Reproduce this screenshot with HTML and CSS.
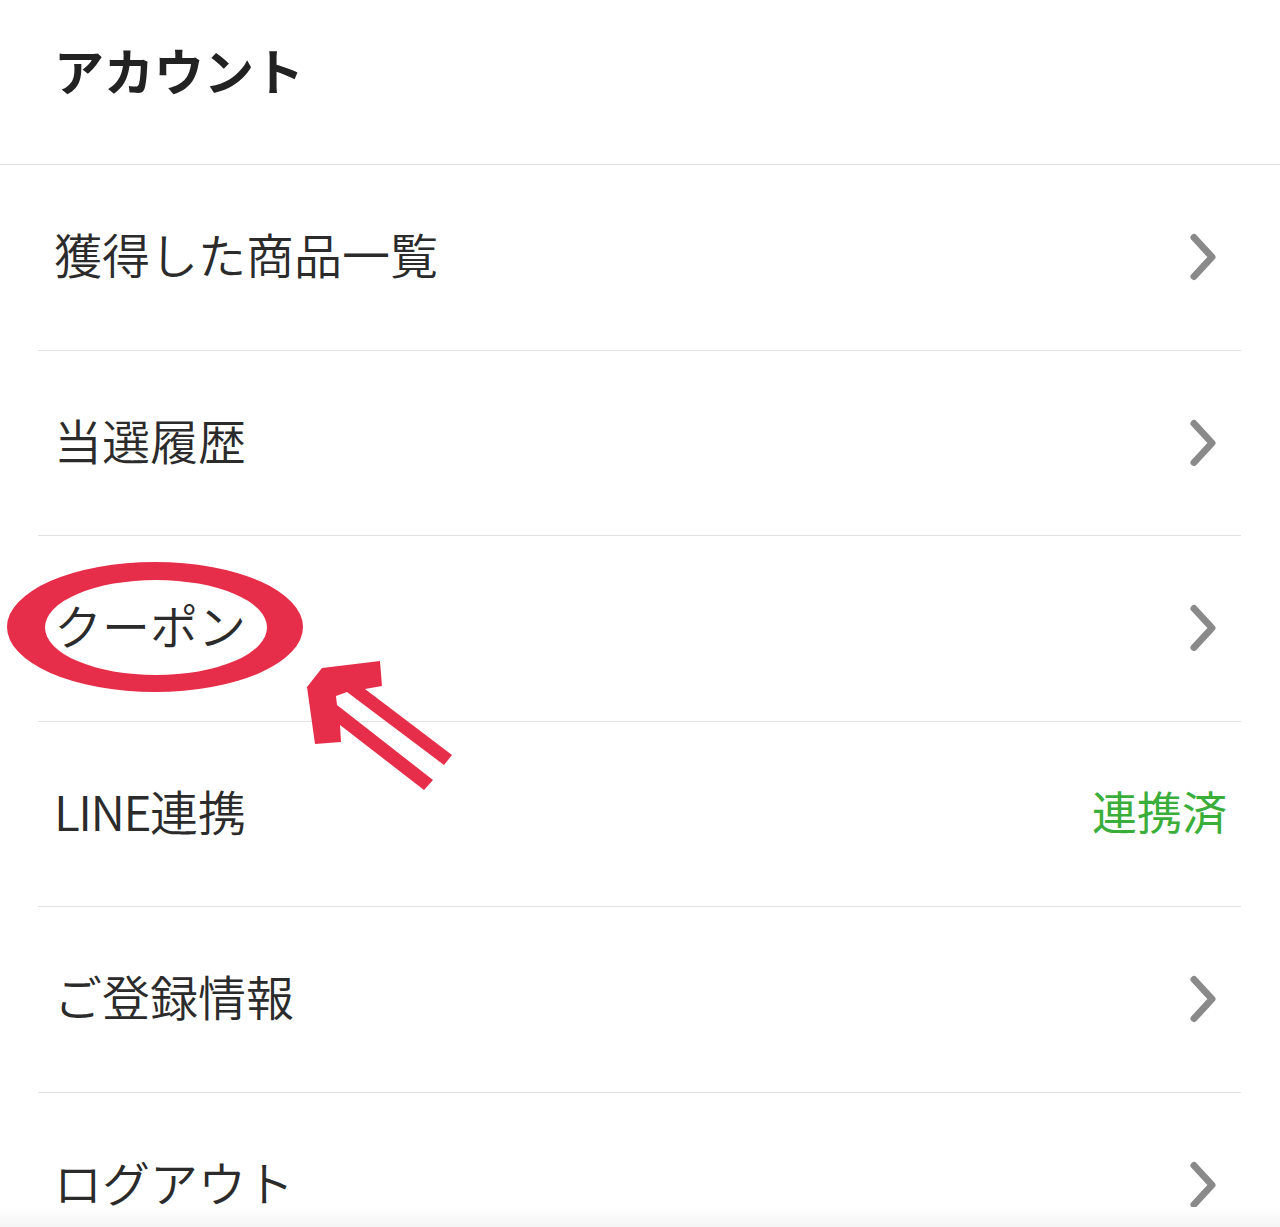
FILE: index.html
```html
<!DOCTYPE html>
<html lang="ja">
<head>
<meta charset="utf-8">
<title>アカウント</title>
<link rel="stylesheet" href="styles.css">
</head>
<body>
<header class="header">
  <h1 class="title">アカウント</h1>
</header>
<ul class="menu">
  <li class="row"><span class="label">獲得した商品一覧</span><svg class="chev" viewBox="0 0 40 50"><path d="M8 5.5 L26 25 L8 44.5"/></svg></li>
  <li class="row"><span class="label">当選履歴</span><svg class="chev" viewBox="0 0 40 50"><path d="M8 5.5 L26 25 L8 44.5"/></svg></li>
  <li class="row"><span class="label">クーポン</span><svg class="chev" viewBox="0 0 40 50"><path d="M8 5.5 L26 25 L8 44.5"/></svg></li>
  <li class="row"><span class="label"><span class="latin">LINE</span>連携</span><span class="status">連携済</span></li>
  <li class="row"><span class="label">ご登録情報</span><svg class="chev" viewBox="0 0 40 50"><path d="M8 5.5 L26 25 L8 44.5"/></svg></li>
  <li class="row"><span class="label">ログアウト</span><svg class="chev" viewBox="0 0 40 50"><path d="M8 5.5 L26 25 L8 44.5"/></svg></li>
</ul>
<svg class="markup" viewBox="0 0 1280 1227" width="1280" height="1227">
  <path class="mark" fill-rule="evenodd" d="M7 627 A148 65 0 1 0 303 627 A148 65 0 1 0 7 627 Z M45 627.5 A111 47.5 0 1 0 267 627.5 A111 47.5 0 1 0 45 627.5 Z"/>
  <polygon class="mark" points="322,668 380,661 382,686 365,689 452,755 444,765 347,692 336,696 337,705 433,780 424,790 340,725 341,742 315,744 307,687"/>
</svg>
<div class="bottom-fade"></div>
</body>
</html>
```
FILE: styles.css
```css
html, body {
  margin: 0;
  padding: 0;
  background: #ffffff;
  height: 1227px;
  overflow: hidden;
}
body {
  position: relative;
  font-family: "Noto Sans CJK JP", "Noto Sans", sans-serif;
  color: #2b2b2b;
}
.header {
  height: 164px;
  box-sizing: content-box;
  border-bottom: 1px solid #dedede;
  padding: 0 0 0 54px;
}
.title {
  margin: 0;
  padding-top: 44px;
  font-size: 50px;
  line-height: 50px;
  font-weight: 700;
  color: #222222;
  letter-spacing: 0;
}
.menu {
  list-style: none;
  margin: 0 39px 0 38px;
  padding: 0;
}
.row {
  box-sizing: border-box;
  height: 185.5px;
  border-bottom: 1px solid #e2e2e2;
  display: flex;
  align-items: center;
  justify-content: space-between;
  padding: 0 15px 0 16px;
}
.label {
  font-size: 48px;
  line-height: 1;
  font-weight: 350;
  color: #2b2b2b;
  padding-bottom: 8px;
}
.latin {
  letter-spacing: -1.5px;
}
.status {
  font-size: 45px;
  line-height: 1;
  font-weight: 400;
  color: #3aae3a;
  margin-right: -1px;
  padding-bottom: 6px;
}
.chev {
  width: 40px;
  height: 50px;
  flex: none;
}
.chev path {
  fill: none;
  stroke: #8a8a8a;
  stroke-width: 7;
  stroke-linecap: round;
  stroke-linejoin: round;
}
.markup {
  position: absolute;
  left: 0;
  top: 0;
  pointer-events: none;
}
.mark {
  fill: #e62e4a;
}
.bottom-fade {
  position: absolute;
  left: 0;
  right: 0;
  bottom: 0;
  height: 20px;
  background: linear-gradient(#ffffff, #f4f4f4);
}
```
